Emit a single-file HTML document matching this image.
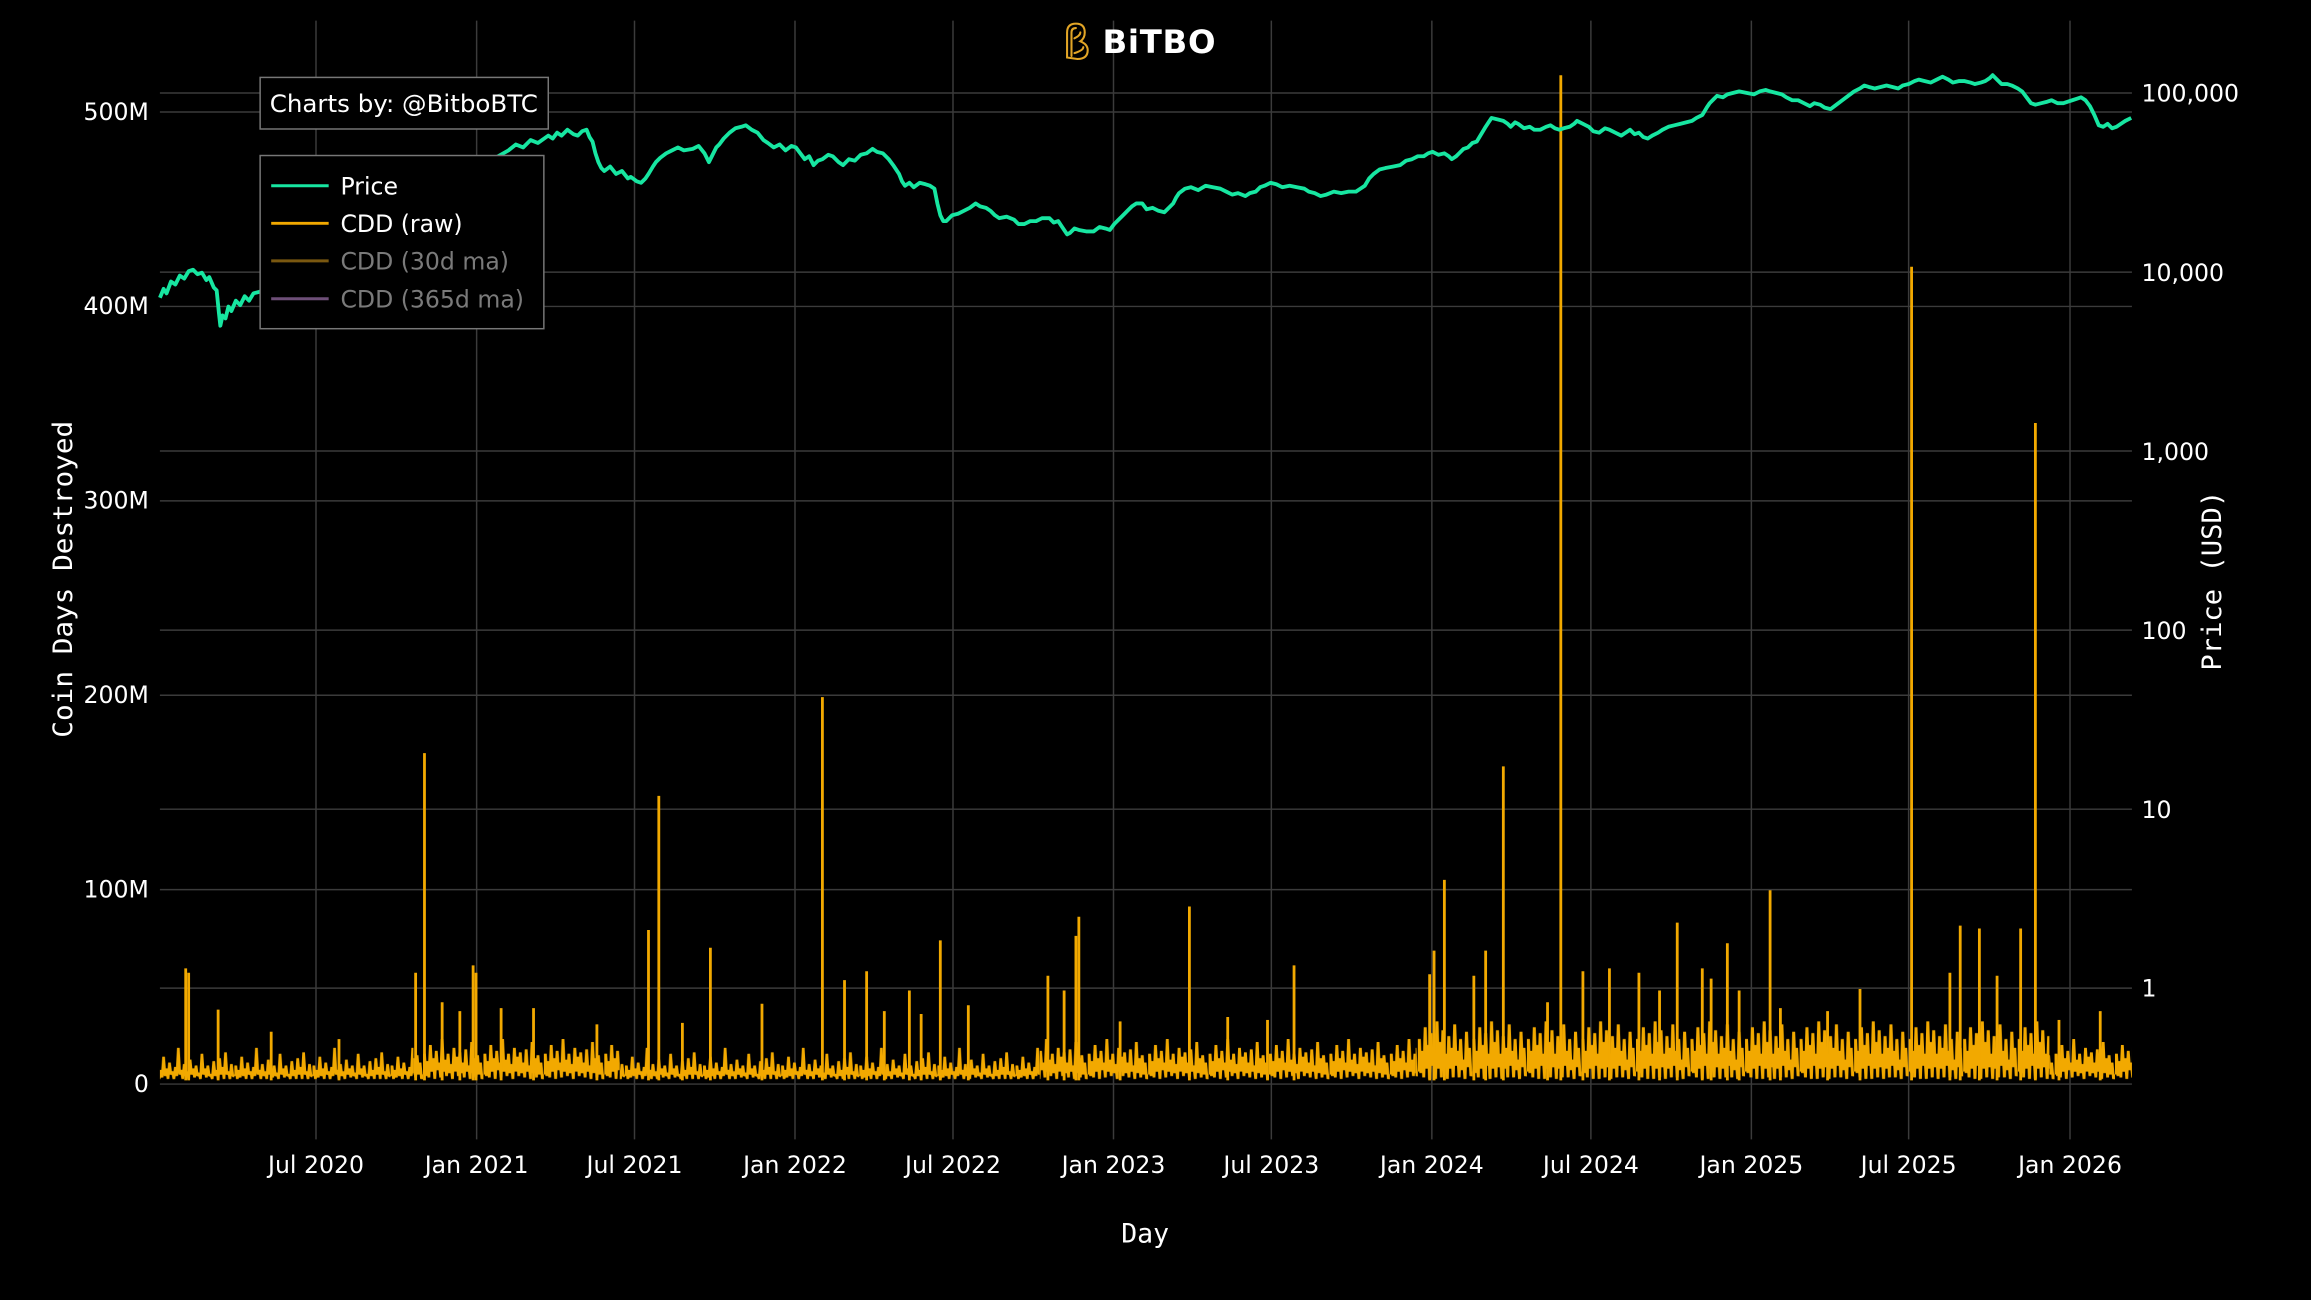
<!DOCTYPE html>
<html><head><meta charset="utf-8"><style>
html,body{margin:0;padding:0;background:#000;}
svg{display:block;}
text{font-family:"DejaVu Sans","Liberation Sans",sans-serif;fill:#fff;}
.m{font-family:"DejaVu Sans Mono","Liberation Mono",monospace;}
</style></head><body>
<svg width="2311" height="1300" viewBox="0 0 1568 882" xmlns="http://www.w3.org/2000/svg">
<defs>
<pattern id="pa" x="0" y="685" width="53" height="50" patternUnits="userSpaceOnUse">
<polyline fill="none" stroke="#f2a900" stroke-width="1.8" stroke-linejoin="bevel" points="0,45 1,38 2,47 3,41 4,46 5,32 6,45 7,40 8,47 9,36 10,44 11,42 12,47 13,39 14,45 15,26 16,44 17,41 18,47 19,37 20,45 21,42 22,47 23,34 24,44 25,40 26,46 27,38 28,45 29,43 30,47 31,30 32,44 33,40 34,46 35,38 36,45 37,44 38,47 39,35 40,45 41,41 42,47 43,33 44,44 45,39 46,47 47,29 48,44 49,42 50,47 51,37 52,45 53,45"/>
</pattern>
<pattern id="pb" x="0" y="685" width="41" height="50" patternUnits="userSpaceOnUse">
<polyline fill="none" stroke="#f2a900" stroke-width="1.9" stroke-linejoin="bevel" points="0,44 1,30 2,45 3,35 4,46 5,24 6,42 7,33 8,47 9,28 10,41 11,36 12,46 13,20 14,42 15,34 16,45 17,30 18,43 19,37 20,47 21,26 22,42 23,32 24,45 25,29 26,43 27,36 28,46 29,27 30,42 31,38 32,47 33,22 34,43 35,33 36,46 37,31 38,44 39,36 40,47 41,44"/>
</pattern>
<pattern id="pc" x="0" y="675" width="37" height="60" patternUnits="userSpaceOnUse">
<polyline fill="none" stroke="#f2a900" stroke-width="2" stroke-linejoin="bevel" points="0,52 1,30 2,53 3,38 4,56 5,22 6,50 7,34 8,57 9,26 10,48 11,40 12,57 13,18 14,50 15,32 16,56 17,24 18,49 19,40 20,57 21,28 22,50 23,36 24,56 25,20 26,48 27,38 28,56 29,30 30,51 31,44 32,57 33,25 34,49 35,36 36,55 37,52"/>
</pattern>
</defs>
<rect width="1568" height="882" fill="#000"/>
<g stroke="#3b3b3b" stroke-width="1">
<line x1="214.4" y1="14" x2="214.4" y2="773"/><line x1="323.4" y1="14" x2="323.4" y2="773"/>
<line x1="430.5" y1="14" x2="430.5" y2="773"/><line x1="539.4" y1="14" x2="539.4" y2="773"/>
<line x1="646.6" y1="14" x2="646.6" y2="773"/><line x1="755.5" y1="14" x2="755.5" y2="773"/>
<line x1="862.6" y1="14" x2="862.6" y2="773"/><line x1="971.5" y1="14" x2="971.5" y2="773"/>
<line x1="1079.4" y1="14" x2="1079.4" y2="773"/><line x1="1188.3" y1="14" x2="1188.3" y2="773"/>
<line x1="1295" y1="14" x2="1295" y2="773"/><line x1="1404.5" y1="14" x2="1404.5" y2="773"/>
<line x1="108.5" y1="735.5" x2="1446.5" y2="735.5"/><line x1="108.5" y1="603.6" x2="1446.5" y2="603.6"/>
<line x1="108.5" y1="471.7" x2="1446.5" y2="471.7"/><line x1="108.5" y1="339.8" x2="1446.5" y2="339.8"/>
<line x1="108.5" y1="207.9" x2="1446.5" y2="207.9"/><line x1="108.5" y1="76" x2="1446.5" y2="76"/>
<line x1="108.5" y1="63.1" x2="1446.5" y2="63.1"/><line x1="108.5" y1="184.6" x2="1446.5" y2="184.6"/>
<line x1="108.5" y1="306" x2="1446.5" y2="306"/><line x1="108.5" y1="427.5" x2="1446.5" y2="427.5"/>
<line x1="108.5" y1="549" x2="1446.5" y2="549"/><line x1="108.5" y1="670.4" x2="1446.5" y2="670.4"/>
</g>
<g font-size="16" text-anchor="end">
<text x="101" y="741">0</text><text x="101" y="609">100M</text><text x="101" y="477">200M</text>
<text x="101" y="345">300M</text><text x="101" y="213">400M</text><text x="101" y="81.5">500M</text>
</g>
<g font-size="16">
<text x="1453" y="69">100,000</text><text x="1453" y="190.5">10,000</text><text x="1453" y="312">1,000</text>
<text x="1453" y="433.5">100</text><text x="1453" y="555">10</text><text x="1453" y="676">1</text>
</g>
<g font-size="16" text-anchor="middle">
<text x="214.4" y="796">Jul 2020</text><text x="323.4" y="796">Jan 2021</text><text x="430.5" y="796">Jul 2021</text>
<text x="539.4" y="796">Jan 2022</text><text x="646.6" y="796">Jul 2022</text><text x="755.5" y="796">Jan 2023</text>
<text x="862.6" y="796">Jul 2023</text><text x="971.5" y="796">Jan 2024</text><text x="1079.4" y="796">Jul 2024</text>
<text x="1188.3" y="796">Jan 2025</text><text x="1295" y="796">Jul 2025</text><text x="1404.5" y="796">Jan 2026</text>
</g>
<text class="m" font-size="18" x="777" y="843" text-anchor="middle">Day</text>
<text class="m" font-size="18" transform="translate(49,393) rotate(-90)" text-anchor="middle" textLength="215" lengthAdjust="spacingAndGlyphs">Coin Days Destroyed</text>
<text class="m" font-size="18" transform="translate(1507,394) rotate(-90)" text-anchor="middle" textLength="122" lengthAdjust="spacingAndGlyphs">Price (USD)</text>

<rect x="108.5" y="685" width="172" height="50" fill="url(#pa)"/>
<rect x="280.5" y="685" width="140" height="50" fill="url(#pb)"/>
<rect x="420.5" y="685" width="285" height="50" fill="url(#pa)"/>
<rect x="705.5" y="685" width="255" height="50" fill="url(#pb)"/>
<rect x="960.5" y="675" width="430" height="60" fill="url(#pc)"/>
<rect x="1390.5" y="685" width="56" height="50" fill="url(#pb)"/>
<g stroke="#f2a900" stroke-width="1.9">
<line x1="126" y1="733" x2="126" y2="657"/><line x1="128" y1="733" x2="128" y2="660"/><line x1="148" y1="733" x2="148" y2="685"/>
<line x1="288" y1="733" x2="288" y2="511"/><line x1="282" y1="733" x2="282" y2="660"/><line x1="321" y1="733" x2="321" y2="655"/>
<line x1="323" y1="733" x2="323" y2="660"/><line x1="440" y1="733" x2="440" y2="631"/><line x1="447" y1="733" x2="447" y2="540"/>
<line x1="482" y1="733" x2="482" y2="643"/><line x1="517" y1="733" x2="517" y2="681"/><line x1="558" y1="733" x2="558" y2="473"/>
<line x1="573" y1="733" x2="573" y2="665"/><line x1="588" y1="733" x2="588" y2="659"/><line x1="617" y1="733" x2="617" y2="672"/>
<line x1="638" y1="733" x2="638" y2="638"/><line x1="657" y1="733" x2="657" y2="682"/><line x1="711" y1="733" x2="711" y2="662"/>
<line x1="730" y1="733" x2="730" y2="635"/><line x1="732" y1="733" x2="732" y2="622"/><line x1="807" y1="733" x2="807" y2="615"/>
<line x1="878" y1="733" x2="878" y2="655"/><line x1="970" y1="733" x2="970" y2="661"/><line x1="973" y1="733" x2="973" y2="645"/>
<line x1="980" y1="733" x2="980" y2="597"/><line x1="1008" y1="733" x2="1008" y2="645"/><line x1="1020" y1="733" x2="1020" y2="520"/>
<line x1="1059" y1="733" x2="1059" y2="51"/><line x1="1074" y1="733" x2="1074" y2="659"/><line x1="1092" y1="733" x2="1092" y2="657"/>
<line x1="1112" y1="733" x2="1112" y2="660"/><line x1="1138" y1="733" x2="1138" y2="626"/><line x1="1155" y1="733" x2="1155" y2="657"/>
<line x1="1172" y1="733" x2="1172" y2="640"/><line x1="1201" y1="733" x2="1201" y2="604"/><line x1="1262" y1="733" x2="1262" y2="671"/>
<line x1="1297" y1="733" x2="1297" y2="181"/><line x1="1330" y1="733" x2="1330" y2="628"/><line x1="1343" y1="733" x2="1343" y2="630"/>
<line x1="1371" y1="733" x2="1371" y2="630"/><line x1="1381" y1="733" x2="1381" y2="287"/><line x1="1425" y1="733" x2="1425" y2="686"/>
<line x1="184" y1="733" x2="184" y2="700"/><line x1="230" y1="733" x2="230" y2="705"/><line x1="300" y1="733" x2="300" y2="680"/>
<line x1="312" y1="733" x2="312" y2="686"/><line x1="340" y1="733" x2="340" y2="684"/><line x1="362" y1="733" x2="362" y2="684"/>
<line x1="405" y1="733" x2="405" y2="695"/><line x1="463" y1="733" x2="463" y2="694"/><line x1="600" y1="733" x2="600" y2="686"/>
<line x1="625" y1="733" x2="625" y2="688"/><line x1="722" y1="733" x2="722" y2="672"/><line x1="760" y1="733" x2="760" y2="693"/>
<line x1="833" y1="733" x2="833" y2="690"/><line x1="860" y1="733" x2="860" y2="692"/><line x1="1000" y1="733" x2="1000" y2="662"/>
<line x1="1050" y1="733" x2="1050" y2="680"/><line x1="1126" y1="733" x2="1126" y2="672"/><line x1="1161" y1="733" x2="1161" y2="664"/>
<line x1="1240" y1="733" x2="1240" y2="686"/><line x1="1323" y1="733" x2="1323" y2="660"/><line x1="1355" y1="733" x2="1355" y2="662"/>
<line x1="1397" y1="733" x2="1397" y2="692"/><line x1="1208" y1="733" x2="1208" y2="684"/><line x1="1180" y1="733" x2="1180" y2="672"/>
</g>
<polyline fill="none" stroke="#17e6a1" stroke-width="2.6" stroke-linejoin="round" points="108.5,202 111,196 113,199 116,191 119,193 122,187 125,189 128,184 131,183 134,186 137,185 140,190 142,188 145,195 147,197 148.5,212 149.5,221 151,214 153,216 155,208 157,211 160,204 163,207 166,201 169,204 172,199 176,198 345,102 350,98 355,100 360,95 365,97 372,92 375,94 378,90 381,92 385,88 389,91 392,92 395,89 398,88 400,93 402,96 404,104 406,110 408,114 410,116 414,113 418,118 422,116 426,121 428,120 432,123 435,124 438,121 440,118 443,113 445,110 448,107 452,104 456,102 460,100 464,102 470,101 474,99 478,104 481,110 483,106 486,100 488,98 491,94 495,90 499,87 503,86 506,85 510,88 514,90 518,95 521,97 525,100 529,98 533,102 537,99 540,100 543,104 546,108 549,106 552,112 555,109 558,108 562,105 565,106 569,110 572,112 576,108 580,109 584,105 588,104 592,101 595,103 599,104 603,108 606,112 610,118 612,123 614,126 617,124 620,127 624,124 628,125 631,126 634,128 636,138 638,146 640,150 642,150 646,146 650,145 654,143 658,141 662,138 665,140 669,141 672,143 675,146 678,148 683,147 688,149 691,152 695,152 699,150 703,150 707,148 712,148 715,151 718,150 720,153 722,156 724,159 726,158 729,155 732,156 737,157 742,157 746,154 750,155 753,156 756,152 759,149 762,146 765,143 768,140 771,138 775,138 778,142 782,141 786,143 790,144 793,141 796,138 798,134 800,131 804,128 808,127 813,129 818,126 823,127 828,128 832,130 836,132 840,131 845,133 848,131 852,130 855,127 858,126 862,124 866,125 870,127 875,126 880,127 885,128 888,130 892,131 896,133 900,132 905,130 910,131 915,130 920,130 923,128 926,126 929,121 932,118 936,115 940,114 945,113 950,112 954,109 958,108 962,106 966,106 969,104 972,103 976,105 980,104 983,106 985,108 988,106 990,104 993,101 996,100 999,97 1002,96 1005,91 1008,86 1010,83 1012,80 1016,81 1020,82 1023,84 1025,86 1028,83 1030,84 1034,87 1038,86 1041,88 1045,88 1049,86 1052,85 1055,87 1058,88 1061,87 1065,86 1068,84 1070,82 1074,84 1078,86 1081,89 1085,90 1089,87 1092,88 1096,90 1100,92 1103,90 1106,88 1109,91 1112,90 1115,93 1118,94 1121,92 1125,90 1128,88 1132,86 1136,85 1140,84 1144,83 1148,82 1151,80 1155,78 1158,73 1160,70 1163,67 1165,65 1169,66 1172,64 1176,63 1180,62 1185,63 1190,64 1194,62 1198,61 1201,62 1205,63 1209,64 1212,66 1216,68 1220,68 1224,70 1228,72 1231,70 1235,71 1238,73 1242,74 1246,71 1250,68 1254,65 1258,62 1262,60 1265,58 1268,59 1272,60 1276,59 1280,58 1284,59 1288,60 1291,58 1295,57 1299,55 1302,54 1306,55 1310,56 1314,54 1318,52 1322,54 1325,56 1329,55 1333,55 1337,56 1340,57 1344,56 1347,55 1350,53 1352,51 1355,54 1358,57 1362,57 1365,58 1369,60 1372,62 1375,66 1378,70 1381,71 1385,70 1389,69 1392,68 1396,70 1400,70 1403,69 1406,68 1409,67 1412,66 1415,68 1418,72 1421,78 1424,85 1427,86 1430,84 1433,87 1436,86 1439,84 1442,82 1446,80"/>
<g fill="none" stroke="#e2a526" stroke-width="1.4" stroke-linecap="round">
<path d="M724 39 L724 22 Q724 16 730 16 Q736 16 736 22 Q736 26 733 28 Q738 30 738 34 Q738 40 731 40 Z"/>
<path d="M727 38 L727 22 Q727 19 730 19"/>
<path d="M729 26 Q733 24 733 22"/><path d="M729 36 Q735 34 735 32"/>
</g>
<text x="748" y="36" font-size="22" font-weight="bold" fill="#f2f2f2" letter-spacing="0.5">BiTBO</text>
<rect x="176.5" y="52.5" width="195.5" height="35" fill="#000" stroke="#777" stroke-width="1"/>
<text x="183" y="76" font-size="16" textLength="182" lengthAdjust="spacingAndGlyphs">Charts by: @BitboBTC</text>
<rect x="176.5" y="105.5" width="192.5" height="117.5" fill="#000" stroke="#777" stroke-width="1"/>
<line x1="184" y1="126" x2="223" y2="126" stroke="#17e6a1" stroke-width="2"/>
<line x1="184" y1="151.5" x2="223" y2="151.5" stroke="#f2a900" stroke-width="2"/>
<line x1="184" y1="177" x2="223" y2="177" stroke="#7a5810" stroke-width="2"/>
<line x1="184" y1="202.7" x2="223" y2="202.7" stroke="#6e4f78" stroke-width="2"/>
<g font-size="16">
<text x="231" y="132">Price</text><text x="231" y="157.5">CDD (raw)</text>
<text x="231" y="183" style="fill:#7a7a7a">CDD (30d ma)</text><text x="231" y="208.7" style="fill:#7a7a7a">CDD (365d ma)</text>
</g>
</svg>
</body></html>
